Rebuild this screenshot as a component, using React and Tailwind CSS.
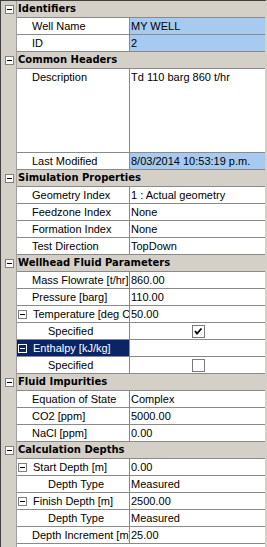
import React from 'react';

const rows = [
  { type: 'cat', label: 'Identifiers' },
  { label: 'Well Name', value: 'MY WELL', blue: true },
  { label: 'ID', value: '2', blue: true },
  { type: 'cat', label: 'Common Headers' },
  { label: 'Description', value: 'Td 110 barg 860 t/hr', tall: true },
  { label: 'Last Modified', value: '8/03/2014 10:53:19 p.m.', blue: true },
  { type: 'cat', label: 'Simulation Properties' },
  { label: 'Geometry Index', value: '1 : Actual geometry' },
  { label: 'Feedzone Index', value: 'None' },
  { label: 'Formation Index', value: 'None' },
  { label: 'Test Direction', value: 'TopDown' },
  { type: 'cat', label: 'Wellhead Fluid Parameters' },
  { label: 'Mass Flowrate [t/hr]', value: '860.00' },
  { label: 'Pressure [barg]', value: '110.00' },
  { label: 'Temperature [deg C]', value: '50.00', expander: true },
  { label: 'Specified', check: true, level: 2 },
  { label: 'Enthalpy [kJ/kg]', value: '', expander: true, selected: true },
  { label: 'Specified', check: false, level: 2 },
  { type: 'cat', label: 'Fluid Impurities' },
  { label: 'Equation of State', value: 'Complex' },
  { label: 'CO2 [ppm]', value: '5000.00' },
  { label: 'NaCl [ppm]', value: '0.00' },
  { type: 'cat', label: 'Calculation Depths' },
  { label: 'Start Depth [m]', value: '0.00', expander: true },
  { label: 'Depth Type', value: 'Measured', level: 2 },
  { label: 'Finish Depth [m]', value: '2500.00', expander: true },
  { label: 'Depth Type', value: 'Measured', level: 2 },
  { label: 'Depth Increment [m]', value: '25.00' },
];

const Box = ({ light }) => (
  <div
    className={`w-[9px] h-[9px] shrink-0 border flex items-center justify-center ${
      light ? 'border-white bg-[#0a246a]' : 'border-[#808080] bg-white'
    }`}
  >
    <div className={`w-[5px] h-px ${light ? 'bg-white' : 'bg-black'}`} />
  </div>
);

const Margin = ({ children }) => (
  <div className="w-[16px] shrink-0 bg-[#d4d0c8] border-r border-[#a0a0a0] flex items-center pl-[4px]">
    {children}
  </div>
);

const CheckBox = ({ checked }) => (
  <svg width="13" height="13" viewBox="0 0 13 13">
    <rect x="0.5" y="0.5" width="12" height="12" fill="#fff" stroke="#7a7a7a" />
    {checked && <path d="M3 6 L5 8.5 L9.5 3.5" fill="none" stroke="#000" strokeWidth="1.8" />}
  </svg>
);

function Row({ row }) {
  if (row.type === 'cat') {
    return (
      <div className="flex h-[17px] shrink-0">
        <Margin>
          <Box />
        </Margin>
        <div className="flex-1 bg-[#d4d0c8] border-b border-[#8a8a8a] pl-px font-['DejaVu_Sans',sans-serif] font-bold text-[10px] leading-[16px] text-black whitespace-nowrap overflow-hidden">
          {row.label}
        </div>
      </div>
    );
  }

  const pad = row.expander ? 'pl-px' : row.level === 2 ? 'pl-[31px]' : 'pl-[15px]';

  return (
    <div className={`flex shrink-0 ${row.tall ? 'h-[84px]' : 'h-[17px]'}`}>
      <Margin />
      <div
        className={`w-[113px] shrink-0 border-r border-b border-[#8a8a8a] ${pad} ${
          row.selected ? 'bg-[#0a246a] text-white' : 'bg-white text-black'
        } overflow-hidden whitespace-nowrap`}
      >
        <div className="flex items-center h-[16px] gap-[6px]">
          {row.expander && <Box light={row.selected} />}
          <span className="leading-[16px]">{row.label}</span>
        </div>
      </div>
      <div
        className={`flex-1 border-b border-[#8a8a8a] pl-px overflow-hidden whitespace-nowrap ${
          row.blue ? 'bg-[#a6caf0]' : 'bg-white'
        }`}
      >
        {row.check !== undefined ? (
          <div className="flex justify-center items-center h-[16px]">
            <CheckBox checked={row.check} />
          </div>
        ) : (
          <div className="h-[16px] leading-[16px] text-black">{row.value}</div>
        )}
      </div>
    </div>
  );
}

export default function App() {
  return (
    <div className="w-[267px] h-[547px] flex flex-col bg-white border-l border-t border-[#404040] border-r-2 border-r-[#d4d0c8] font-['Liberation_Sans',Arial,sans-serif] text-[11px] overflow-hidden">
      {rows.map((row, i) => (
        <Row key={i} row={row} />
      ))}
      <div className="flex flex-1">
        <Margin />
        <div className="flex-1 bg-white" />
      </div>
    </div>
  );
}
